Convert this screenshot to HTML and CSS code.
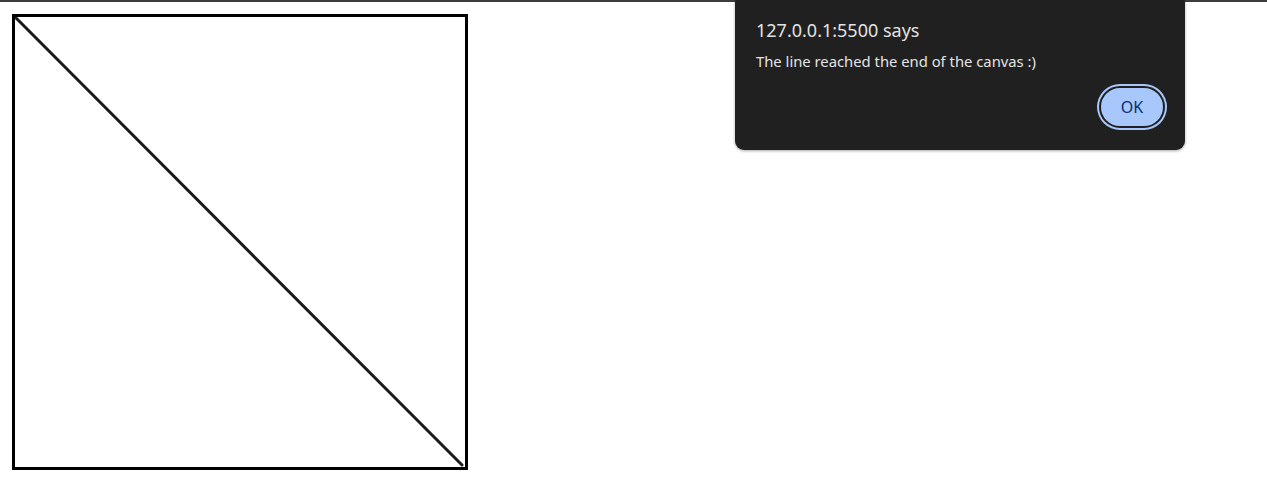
FILE: index.html
```html
<!DOCTYPE html>
<html lang="en">
<head>
    <meta charset="UTF-8">
    <meta name="viewport" content="width=device-width, initial-scale=1.0">
    <title>Line Canvas</title>
    <link rel="stylesheet" href="styles.css">
</head>
<body>

<div class="topbar"></div>

<div class="page">
    <div class="canvas">
        <svg width="450" height="450" viewBox="0 0 450 450">
            <line x1="0" y1="0" x2="447" y2="448" stroke="#1a1a1a" stroke-width="3" stroke-linecap="round"/>
        </svg>
    </div>
</div>

<div class="dialog">
    <div class="dialog-title">127.0.0.1:5500 says</div>
    <div class="dialog-msg">The line reached the end of the canvas :)</div>
    <div class="dialog-actions">
        <button class="ok-btn">OK</button>
    </div>
</div>

</body>
</html>
```
FILE: styles.css
```css
body {
    margin: 0;
    font-family: "Noto Sans", sans-serif;
    background: #fff;
}
.topbar {
    height: 2px;
    background-color: #3c3c3c;
}
.page {
    padding: 12px 0 0 12px;
}
.canvas {
    width: 450px;
    height: 450px;
    border: 3px solid #000;
}
.canvas svg {
    display: block;
}
.dialog {
    position: absolute;
    top: -6px;
    left: 735px;
    width: 450px;
    height: 156px;
    box-sizing: border-box;
    padding: 24px 20px 0 21px;
    background-color: #202020;
    border-radius: 9px;
    box-shadow: 0 1px 3px rgba(0, 0, 0, 0.35);
    color: #e3e3e3;
}
.dialog-title {
    font-size: 18px;
    line-height: 24px;
}
.dialog-msg {
    margin-top: 9px;
    font-size: 14.8px;
    line-height: 20px;
}
.dialog-actions {
    display: flex;
    justify-content: flex-end;
    margin-top: 15px;
}
.ok-btn {
    width: 66px;
    height: 42px;
    margin-right: 0;
    border: 2px solid #1f1f1f;
    border-radius: 21px;
    background-color: #a8c7fa;
    color: #062e6f;
    font-family: "Noto Sans", sans-serif;
    font-size: 16px;
    box-shadow: 0 0 0 2px #a8c7fa;
    cursor: pointer;
}
```
